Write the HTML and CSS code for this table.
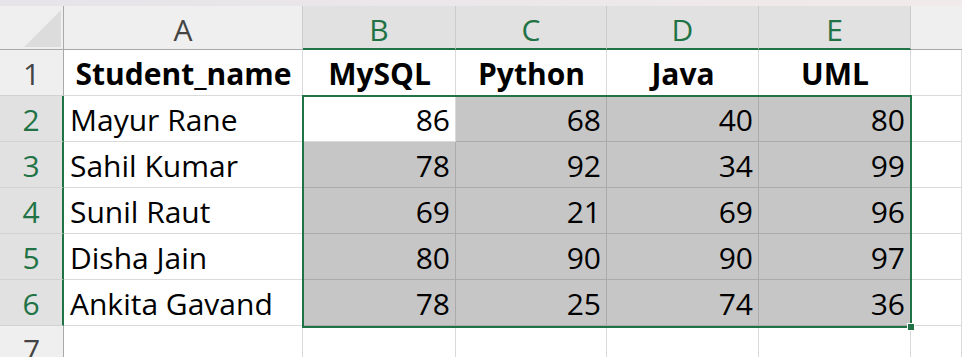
FILE: index.html
```html
<!DOCTYPE html>
<html>
<head>
<meta charset="utf-8">
<link rel="stylesheet" href="styles.css">
</head>
<body>
<div class="sheet">
  <div class="topstrip"></div>
  <div class="grid">
    <div class="corner hdr"><svg width="63" height="43" viewBox="0 0 63 43"><polygon points="24,41 61,41 61,4" fill="#dcdcdc"/></svg></div>
    <div class="colhdr hdr">A</div>
    <div class="colhdr hdr sel">B</div>
    <div class="colhdr hdr sel">C</div>
    <div class="colhdr hdr sel">D</div>
    <div class="colhdr hdr sel">E</div>
    <div class="colhdr hdr last"></div>

    <div class="rowhdr hdr">1</div>
    <div class="cell head">Student_name</div>
    <div class="cell head">MySQL</div>
    <div class="cell head">Python</div>
    <div class="cell head">Java</div>
    <div class="cell head">UML</div>
    <div class="cell"></div>

    <div class="rowhdr hdr sel">2</div>
    <div class="cell">Mayur Rane</div>
    <div class="cell num">86</div>
    <div class="cell num shade">68</div>
    <div class="cell num shade">40</div>
    <div class="cell num shade">80</div>
    <div class="cell"></div>

    <div class="rowhdr hdr sel">3</div>
    <div class="cell">Sahil Kumar</div>
    <div class="cell num shade">78</div>
    <div class="cell num shade">92</div>
    <div class="cell num shade">34</div>
    <div class="cell num shade">99</div>
    <div class="cell"></div>

    <div class="rowhdr hdr sel">4</div>
    <div class="cell">Sunil Raut</div>
    <div class="cell num shade">69</div>
    <div class="cell num shade">21</div>
    <div class="cell num shade">69</div>
    <div class="cell num shade">96</div>
    <div class="cell"></div>

    <div class="rowhdr hdr sel">5</div>
    <div class="cell">Disha Jain</div>
    <div class="cell num shade">80</div>
    <div class="cell num shade">90</div>
    <div class="cell num shade">90</div>
    <div class="cell num shade">97</div>
    <div class="cell"></div>

    <div class="rowhdr hdr sel">6</div>
    <div class="cell">Ankita Gavand</div>
    <div class="cell num shade">78</div>
    <div class="cell num shade">25</div>
    <div class="cell num shade">74</div>
    <div class="cell num shade">36</div>
    <div class="cell"></div>

    <div class="rowhdr hdr">7</div>
    <div class="cell"></div>
    <div class="cell"></div>
    <div class="cell"></div>
    <div class="cell"></div>
    <div class="cell"></div>
    <div class="cell"></div>

    <div class="selection"><span class="handle"></span></div>
  </div>
</div>
</body>
</html>
```
FILE: styles.css
```css
html, body {
  margin: 0;
  padding: 0;
  background: #ffffff;
  overflow: hidden;
}
.sheet {
  width: 962px;
  height: 357px;
  overflow: hidden;
  font-family: "Open Sans", Lato, sans-serif;
  color: #000;
}
.topstrip {
  height: 6px;
  background: linear-gradient(to right, #e6e4e9, #f1eaea);
}
.grid {
  display: grid;
  grid-template-columns: 64px 239px 153px 151px 152px 152px 1fr;
  grid-template-rows: 44px repeat(7, 46px);
  position: relative;
}
.grid > div {
  box-sizing: border-box;
  display: flex;
  align-items: flex-end;
  white-space: nowrap;
  overflow: hidden;
}
.hdr {
  background: #efefef;
  color: #444444;
  font-size: 30px;
  font-weight: 400;
  line-height: 1;
  justify-content: center;
  padding-bottom: 4px;
}
.corner {
  border-right: 1px solid #a9a9a9;
  border-bottom: 1px solid #a9a9a9;
  align-items: flex-start !important;
  padding-bottom: 0 !important;
}
.corner svg {
  display: block;
}
.colhdr {
  border-right: 1px solid #cbcbcb;
  border-bottom: 1px solid #a9a9a9;
}
.colhdr.sel {
  background: #e1e1e1;
  color: #217346;
  border-bottom: 2px solid #217346;
  padding-bottom: 3px;
}
.colhdr.last {
  border-right: none;
}
.rowhdr {
  border-right: 1px solid #a9a9a9;
  border-bottom: 1px solid #d2d2d2;
  padding-bottom: 6px;
}
.rowhdr.sel {
  background: #e1e1e1;
  color: #217346;
  border-right: 2px solid #217346;
}
.cell {
  background: #ffffff;
  border-right: 1px solid #dadada;
  border-bottom: 1px solid #dadada;
  font-size: 30px;
  line-height: 1;
  padding: 0 5px 6px 6px;
}
.cell.head {
  font-weight: 700;
  justify-content: center;
}
.cell.num {
  justify-content: flex-end;
}
.cell.shade {
  background: #c6c6c6;
  border-right-color: #ababab;
  border-bottom-color: #ababab;
}
.grid > .selection {
  position: absolute;
  grid-column: 3 / 7;
  grid-row: 3 / 8;
  top: -1px;
  left: -1px;
  right: -1px;
  bottom: -2px;
  border: 2px solid #217346;
  overflow: visible;
  pointer-events: none;
}
.handle {
  position: absolute;
  right: -5px;
  bottom: -5px;
  width: 6px;
  height: 6px;
  background: #217346;
  border: 1px solid #ffffff;
}
```
